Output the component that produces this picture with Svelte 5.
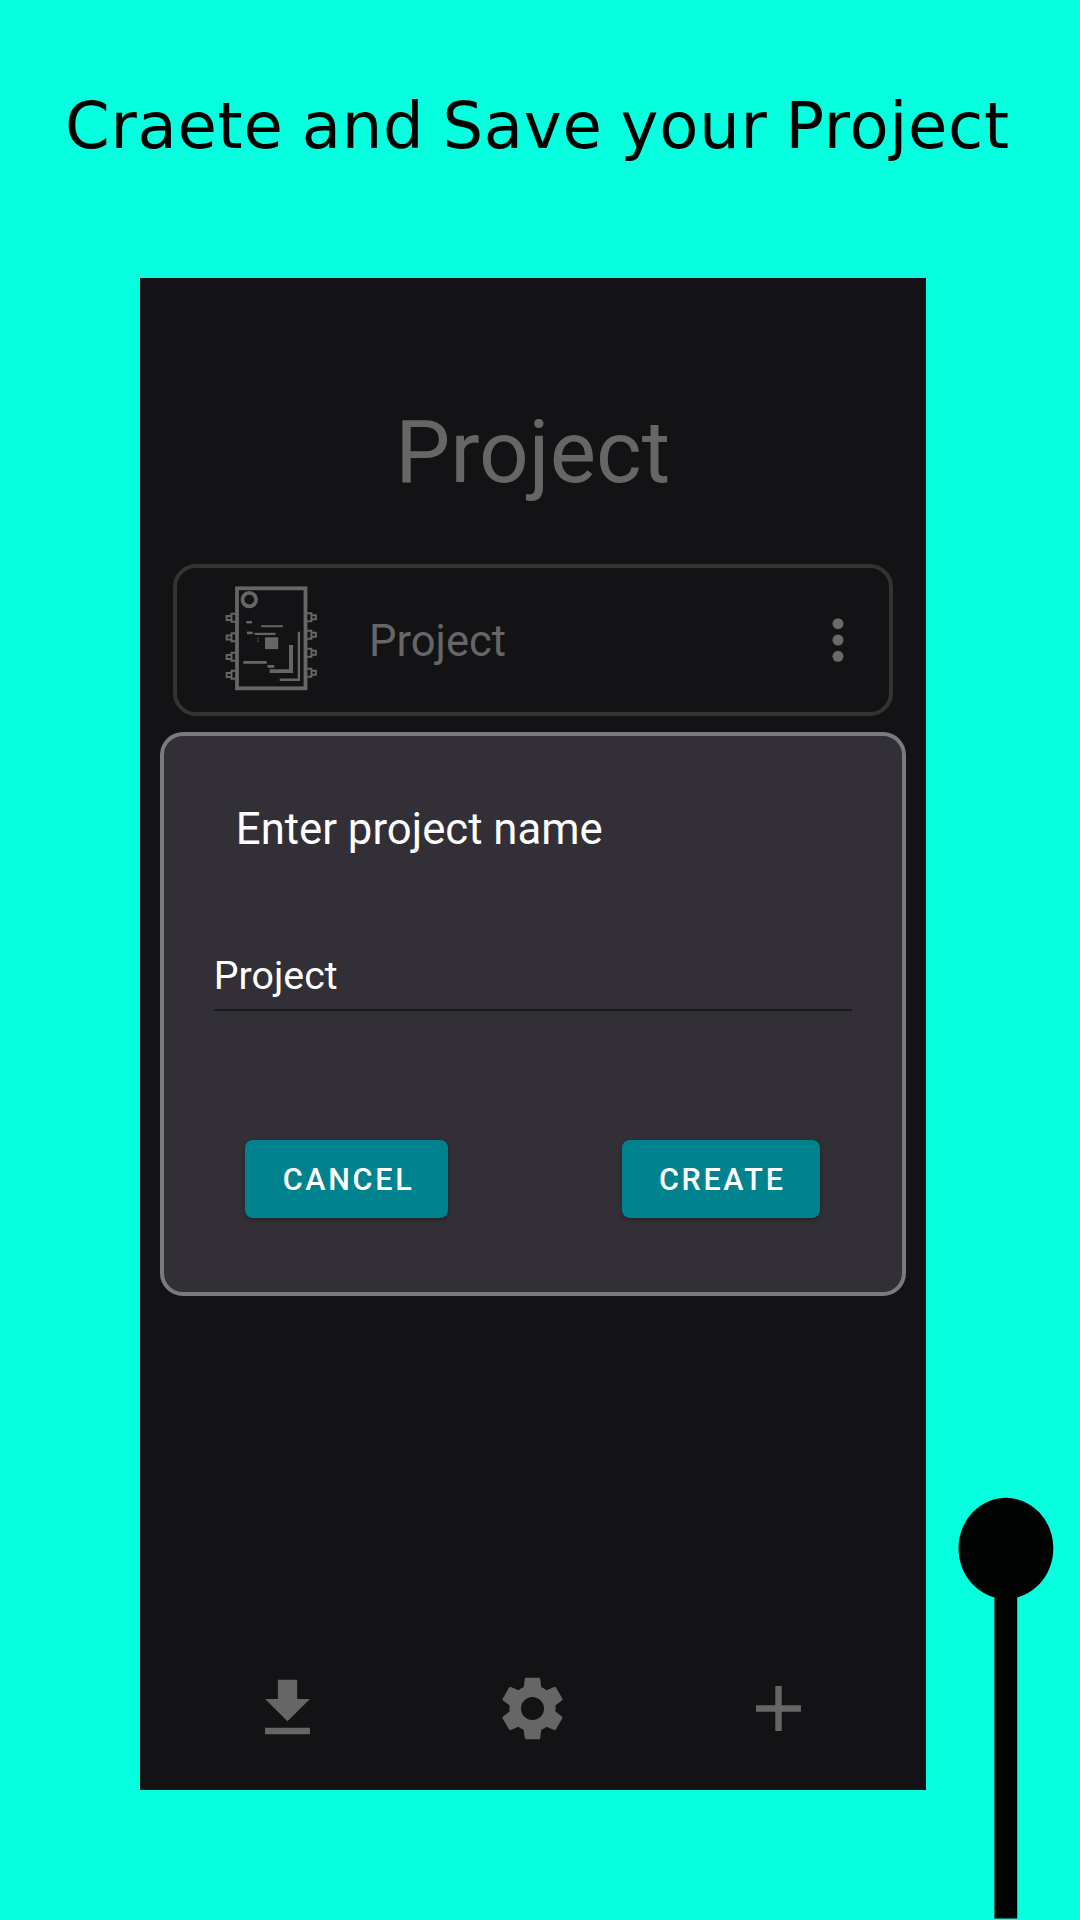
<script>
  const leftPins = [616.5, 636, 655.5, 673.5];
  const rightPins = [615.5, 633, 651, 671];
</script>

<div class="page">
  <header class="headline"><span>Craete and Save your Project</span></header>

  <main class="phone">
    <h1>Project</h1>
    <section class="card">
      <svg class="chip" viewBox="224 584 94 108" fill="none" stroke="#666">
        <rect x="237" y="588.3" width="68.5" height="100" stroke-width="3.8" />
        <circle cx="249.3" cy="599.6" r="6.8" stroke-width="3.8" />
        {#each leftPins as y}
          <path d="M235.5 {y - 2.7}h-4v8h4M231 {y - 0.5}h-4.4v4h4.4" stroke-width="1.9" />
        {/each}
        {#each rightPins as y}
          <path d="M307.2 {y - 2.3}h4.2v8h-4.2M311.5 {y - 0.3}h4.4v4h-4.4" stroke-width="1.9" />
        {/each}
        <g fill="#666" stroke="none">
          <rect x="265" y="637.3" width="13.2" height="11.8" />
          <rect x="246.3" y="621" width="5.6" height="2.4" />
          <rect x="247" y="631.6" width="5.8" height="2.6" />
          <rect x="261.3" y="625.2" width="21.5" height="2" />
          <rect x="254.5" y="632.8" width="21" height="2.2" />
          <rect x="257.3" y="637.8" width="1.2" height="1.4" />
          <rect x="257.3" y="640.4" width="1.2" height="1.6" />
          <rect x="243.3" y="661" width="23.5" height="2.8" />
          <rect x="267.5" y="665" width="6.7" height="2.8" />
          <path d="M289 645h4v28h-23.3v-3.8H289zM297.8 631.8h2.3v49.2h-20.4v-2.4h18.1z" />
        </g>
      </svg>
      <span class="name">Project</span>
      <svg class="dots" viewBox="0 0 12 44" fill="#6a6a6a">
        <circle cx="6" cy="5.7" r="5.5" /><circle cx="6" cy="22" r="5.5" /><circle cx="6" cy="38.3" r="5.5" />
      </svg>
    </section>

    <section class="dialog">
      <h2>Enter project name</h2>
      <div class="field">Project</div>
      <div class="actions">
        <button class="cancel">CANCEL</button>
        <button class="create">CREATE</button>
      </div>
    </section>

    <nav>
      <svg viewBox="0 0 24 24"><path d="M19 9h-4V3H9v6H5l7 7 7-7zM5 18v2h14v-2H5z" /></svg>
      <svg viewBox="0 0 24 24"><path d="M19.14 12.94c.04-.3.06-.61.06-.94 0-.32-.02-.64-.07-.94l2.03-1.58c.18-.14.23-.41.12-.61l-1.92-3.32c-.12-.22-.37-.29-.59-.22l-2.39.96c-.5-.38-1.03-.7-1.62-.94l-.36-2.54c-.04-.24-.24-.41-.48-.41h-3.84c-.24 0-.43.17-.47.41l-.36 2.54c-.59.24-1.13.57-1.62.94l-2.39-.96c-.22-.08-.47 0-.59.22L2.74 8.87c-.12.21-.08.47.12.61l2.03 1.58c-.05.3-.09.63-.09.94s.02.64.07.94l-2.03 1.58c-.18.14-.23.41-.12.61l1.92 3.32c.12.22.37.29.59.22l2.39-.96c.5.38 1.03.7 1.62.94l.36 2.54c.05.24.24.41.48.41h3.84c.24 0 .44-.17.47-.41l.36-2.54c.59-.24 1.13-.56 1.62-.94l2.39.96c.22.08.47 0 .59-.22l1.92-3.32c.12-.22.07-.47-.12-.61l-2.01-1.58zM12 15.6c-1.98 0-3.6-1.62-3.6-3.6s1.62-3.6 3.6-3.6 3.6 1.62 3.6 3.6-1.62 3.6-3.6 3.6z" /></svg>
      <svg viewBox="0 0 24 24"><path d="M19 13h-6v6h-2v-6H5v-2h6V5h2v6h6v2z" /></svg>
    </nav>
  </main>

  <svg class="pin" viewBox="958 1497 96 423">
    <path d="M994.4 1579h22.8v339.6h-22.8z" />
    <ellipse cx="1005.9" cy="1548.3" rx="47.4" ry="50.5" />
  </svg>
</div>

<style>
  :global(body) { background: #06ffde; }
  .page {
    position: relative;
    box-sizing: border-box;
    width: 1080px;
    height: 1920px;
    overflow: hidden;
    background: #06ffde;
    font-family: Roboto, sans-serif;
  }
  .headline {
    box-sizing: border-box;
    height: 278px;
    padding: 89px 0 0 65px;
    font: 64px/75px "DejaVu Sans", sans-serif;
    letter-spacing: 0.75px;
    word-spacing: -3px;
    color: #000;
    white-space: nowrap;
  }
  .phone {
    box-sizing: border-box;
    display: flex;
    flex-direction: column;
    width: 785.6px;
    height: 1511.7px;
    margin-left: 140px;
    background: #131315;
  }
  h1 {
    margin: 124px 0 0;
    height: 162px;
    font-size: 87.3px;
    line-height: 100px;
    font-weight: 400;
    text-align: center;
    color: #666;
  }
  .card {
    box-sizing: border-box;
    display: flex;
    align-items: center;
    width: 720px;
    height: 151.5px;
    margin-left: 33px;
    padding: 0 45px 0 47px;
    border: 4px solid #333;
    border-radius: 23px;
    color: #666;
  }
  .chip { width: 94px; height: 108px; margin-top: -3px; }
  .name { margin: 5px 0 0 51px; font-size: 43.5px; line-height: 52px; }
  .dots { width: 12px; height: 44px; margin-left: auto; }
  .dialog {
    box-sizing: border-box;
    width: 746.2px;
    height: 563.7px;
    margin: 16.5px 0 0 19.8px;
    padding: 67px 50px 0 50px;
    border: 4.5px solid #7b7a7d;
    border-radius: 23px;
    background: #323036;
    color: #fff;
  }
  h2 {
    margin: 0 0 0 22px;
    height: 139px;
    font-size: 43.7px;
    line-height: 52px;
    font-weight: 400;
  }
  .field {
    box-sizing: border-box;
    height: 69px;
    border-bottom: 2px solid #1a191c;
    font-size: 39.3px;
    line-height: 68px;
  }
  .actions {
    display: flex;
    justify-content: space-between;
    padding: 129px 32px 0 31.5px;
  }
  button {
    height: 77.7px;
    padding: 3px 0 0 2px;
    border: 0;
    border-radius: 8px;
    background: #00838f;
    box-shadow: 0 2px 4px rgb(0 0 0 / 30%);
    font: 500 30.5px/74px Roboto, sans-serif;
    letter-spacing: 2.7px;
    color: #fff;
  }
  .cancel { width: 202.5px; padding-left: 4px; }
  .create { width: 197.5px; }
  nav {
    display: flex;
    justify-content: space-between;
    margin: 374px 108.5px 0 108.5px;
  }
  nav svg { width: 77px; height: 77px; fill: #666; }
  .pin {
    position: absolute;
    left: 958px;
    top: 1497px;
    width: 96px;
    height: 423px;
    fill: #000302;
  }
</style>
